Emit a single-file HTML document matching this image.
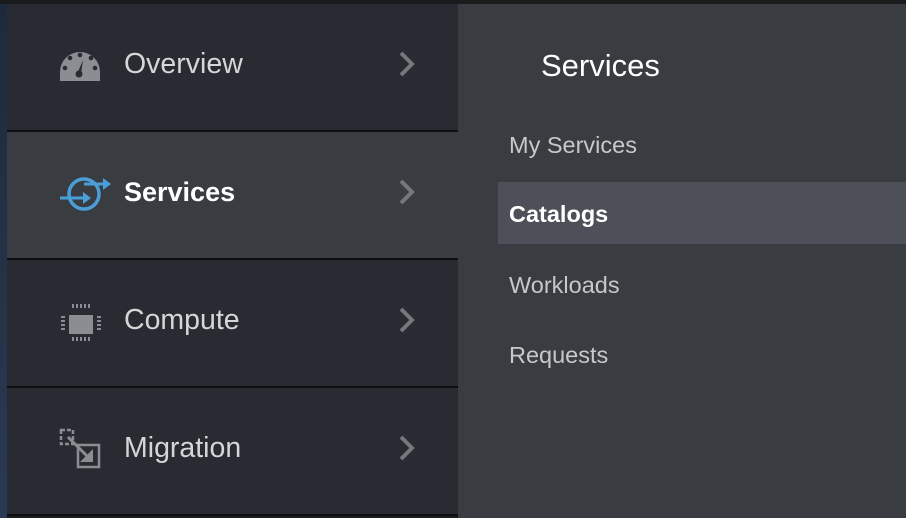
<!DOCTYPE html>
<html><head><style>
body{margin:0;width:906px;height:518px;overflow:hidden;background:#1b1c1f;font-family:"Liberation Sans",sans-serif;position:relative}
.strip{position:absolute;left:0;top:0;width:7px;height:518px;background:linear-gradient(#1e2a3c,#2a3a52)}
.top{position:absolute;left:0;top:0;width:906px;height:4px;background:#1a1b1d}
.row{position:absolute;left:7px;width:451px;height:126px;background:#292b33}
.row.act{background:#393c40}
.sep{position:absolute;left:7px;width:451px;height:2px;background:#0d0e10}
.lbl{position:absolute;left:117px;top:-3px;line-height:126px;font-size:28.5px;color:#d6d6d6}
.row.act .lbl{color:#fff;font-weight:bold;font-size:27px}
.panel{position:absolute;left:458px;top:4px;width:448px;height:514px;background:#393c40}
.h{position:absolute;left:83px;top:44px;font-size:31px;color:#fff}
.it{position:absolute;left:51px;font-size:23.5px;color:#c8c8c8}
.hl{position:absolute;left:40px;top:178px;width:408px;height:62px;background:#4d5058}
svg.ov{position:absolute;left:0;top:0}
</style></head><body>
<div class="strip"></div>
<div class="row" style="top:4px"><div class="lbl">Overview</div></div>
<div class="sep" style="top:130px"></div>
<div class="row act" style="top:132px"><div class="lbl">Services</div></div>
<div class="sep" style="top:258px"></div>
<div class="row" style="top:260px"><div class="lbl">Compute</div></div>
<div class="sep" style="top:386px"></div>
<div class="row" style="top:388px"><div class="lbl">Migration</div></div>
<div class="sep" style="top:514px"></div>
<div class="top"></div>
<div class="panel">
<div class="h">Services</div>
<div class="it" style="top:128px">My Services</div>
<div class="hl"></div>
<div class="it" style="top:197px;color:#fff;font-weight:bold">Catalogs</div>
<div class="it" style="top:268px">Workloads</div>
<div class="it" style="top:338px">Requests</div>
</div>
<svg class="ov" width="906" height="518">
<g stroke="#75777c" stroke-width="4" fill="none">
<path d="M401 53 L412 64 L401 75"/><path d="M401 181 L412 192 L401 203"/><path d="M401 309 L412 320 L401 331"/><path d="M401 437 L412 448 L401 459"/>
</g>
<path d="M60 72 A20 20 0 0 1 100 72 L100 81 L60 81 Z" fill="#8b8d92"/>
<g fill="#292b33"><circle cx="65" cy="68" r="2.3"/><circle cx="70" cy="58" r="2.3"/><circle cx="80" cy="55" r="2.3"/><circle cx="91" cy="58" r="2.3"/><circle cx="95" cy="68" r="2.3"/><circle cx="79" cy="74" r="3.5"/><path d="M77.5 73 L83 60 L81 74Z"/></g>
<circle cx="84" cy="194" r="15" stroke="#4a9fd8" stroke-width="3.5" fill="none"/>
<path d="M60 198 L84 198" stroke="#4a9fd8" stroke-width="3"/><path d="M83 192 L91 198 L83 204Z" fill="#4a9fd8"/>
<path d="M84 184 L104 184" stroke="#4a9fd8" stroke-width="3"/><path d="M103 178 L111 184 L103 190Z" fill="#4a9fd8"/>
<rect x="69" y="315" width="24" height="19" fill="#8b8d92"/>
<g stroke="#8b8d92" stroke-width="2"><path d="M73 304V308 M77 304V308 M81 304V308 M85 304V308 M89 304V308 M73 337V341 M77 337V341 M81 337V341 M85 337V341 M89 337V341 M61 317H65 M61 321H65 M61 325H65 M61 329H65 M97 317H101 M97 321H101 M97 325H101 M97 329H101"/></g>
<rect x="61" y="430" width="12" height="14" stroke="#8b8d92" stroke-width="2.5" stroke-dasharray="4 2" fill="none"/>
<rect x="78" y="445" width="21" height="22" stroke="#8b8d92" stroke-width="2.5" fill="none"/>
<path d="M68 437 L89 458" stroke="#8b8d92" stroke-width="3"/><path d="M93 449 L93 462 L80 462Z" fill="#8b8d92"/>
</svg>
</body></html>
